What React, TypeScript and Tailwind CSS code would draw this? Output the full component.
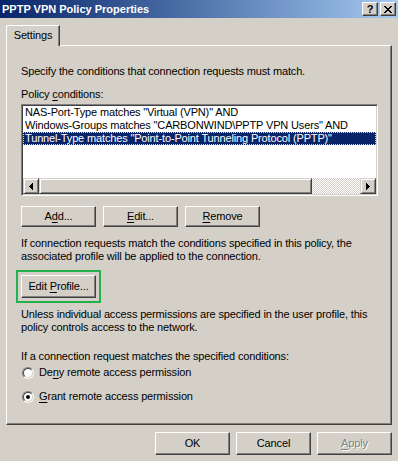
import React from "react";

function U({ children }: { children: React.ReactNode }) {
  return <span className="underline decoration-1 underline-offset-[2px]">{children}</span>;
}

function Btn({ children, className = "" }: { children: React.ReactNode; className?: string }) {
  return (
    <div
      className={
        "flex w-[75px] items-center justify-center border border-t-white border-l-white border-r-[#404040] border-b-[#404040] bg-[#d4d0c8] shadow-[inset_-1px_-1px_0_#808080] " +
        className
      }
    >
      <span className="whitespace-pre">{children}</span>
    </div>
  );
}

function Radio({ checked }: { checked?: boolean }) {
  return (
    <div className="h-[12px] w-[12px] shrink-0 rounded-full border border-t-[#808080] border-l-[#808080] border-r-white border-b-white">
      <div className="flex h-full w-full items-center justify-center rounded-full border border-t-[#404040] border-l-[#404040] border-r-[#d4d0c8] border-b-[#d4d0c8] bg-white">
        {checked && <div className="h-[4px] w-[4px] rounded-full bg-black" />}
      </div>
    </div>
  );
}

function SBtn({ children, className = "" }: { children?: React.ReactNode; className?: string }) {
  return (
    <div
      className={
        "flex h-[16px] shrink-0 items-center justify-center border border-t-[#d4d0c8] border-l-[#d4d0c8] border-r-[#404040] border-b-[#404040] bg-[#d4d0c8] shadow-[inset_1px_1px_0_#fff,inset_-1px_-1px_0_#808080] " +
        className
      }
    >
      {children}
    </div>
  );
}

function ArrowLeft() {
  return (
    <svg width="4" height="7" viewBox="0 0 4 7" shapeRendering="crispEdges" className="-ml-[1px]">
      <rect x="0" y="3" width="1" height="1" fill="#000" />
      <rect x="1" y="2" width="1" height="3" fill="#000" />
      <rect x="2" y="1" width="1" height="5" fill="#000" />
      <rect x="3" y="0" width="1" height="7" fill="#000" />
    </svg>
  );
}

function ArrowRight() {
  return (
    <svg width="4" height="7" viewBox="0 0 4 7" shapeRendering="crispEdges" className="-ml-[1px]">
      <rect x="3" y="3" width="1" height="1" fill="#000" />
      <rect x="2" y="2" width="1" height="3" fill="#000" />
      <rect x="1" y="1" width="1" height="5" fill="#000" />
      <rect x="0" y="0" width="1" height="7" fill="#000" />
    </svg>
  );
}

function CloseGlyph() {
  return (
    <svg width="8" height="7" viewBox="0 0 8 7" shapeRendering="crispEdges">
      <g fill="#000">
        <rect x="0" y="0" width="2" height="1" />
        <rect x="6" y="0" width="2" height="1" />
        <rect x="1" y="1" width="2" height="1" />
        <rect x="5" y="1" width="2" height="1" />
        <rect x="2" y="2" width="4" height="1" />
        <rect x="3" y="3" width="2" height="1" />
        <rect x="2" y="4" width="4" height="1" />
        <rect x="1" y="5" width="2" height="1" />
        <rect x="5" y="5" width="2" height="1" />
        <rect x="0" y="6" width="2" height="1" />
        <rect x="6" y="6" width="2" height="1" />
      </g>
    </svg>
  );
}

function CapBtn({ children }: { children: React.ReactNode }) {
  return (
    <div className="flex h-[14px] w-[16px] items-center justify-center border border-t-white border-l-white border-r-[#404040] border-b-[#404040] bg-[#d4d0c8] shadow-[inset_-1px_-1px_0_#808080]">
      {children}
    </div>
  );
}

export default function App() {
  return (
    <div className="relative h-[461px] w-[398px] overflow-hidden bg-[#d4d0c8] font-['Liberation_Sans',Arial,sans-serif] text-[11px] leading-[13px] tracking-[-0.15px] text-black">
      {/* Title bar */}
      <div className="flex h-[18px] items-center justify-between bg-linear-to-r from-[#0a246a] to-[#a6caf0] pl-[2px] pr-[2px]">
        <span className="font-bold tracking-normal text-white">PPTP VPN Policy Properties</span>
        <div className="flex gap-[2px]">
          <CapBtn>
            <span className="text-[11px] font-bold leading-none text-black">?</span>
          </CapBtn>
          <CapBtn>
            <CloseGlyph />
          </CapBtn>
        </div>
      </div>

      {/* Tab */}
      <div className="relative z-10 ml-[6px] mt-[7px] -mb-[1px] flex h-[21px] w-[54px] justify-center rounded-tl-[2px] border-t border-l border-r border-t-white border-l-white border-r-[#404040] bg-[#d4d0c8] pt-[3px] shadow-[inset_-1px_0_0_#808080]">
        Settings
      </div>

      {/* Panel */}
      <div className="ml-[6px] flex h-[380px] w-[386px] flex-col border border-t-white border-l-white border-r-[#404040] border-b-[#404040] pl-[14px] pt-[19px] shadow-[inset_-1px_-1px_0_#808080]">
        <div className="whitespace-nowrap">Specify the conditions that connection requests must match.</div>
        <div className="mt-[10px] whitespace-nowrap">
          Policy <U>c</U>onditions:
        </div>

        {/* List box */}
        <div className="mt-[3px] flex h-[92px] w-[357px] flex-col border border-t-[#808080] border-l-[#808080] border-r-white border-b-white p-[1px] shadow-[inset_1px_1px_0_#404040,inset_-1px_-1px_0_#d4d0c8]">
          <div className="flex-1 overflow-hidden bg-white">
            <div className="h-[13px] whitespace-nowrap pl-[2px]">NAS-Port-Type matches "Virtual (VPN)" AND</div>
            <div className="h-[13px] whitespace-nowrap pl-[2px]">
              {'Windows-Groups matches "CARBONWIND\\PPTP VPN Users" AND'}
            </div>
            <div className="h-[13px] whitespace-nowrap bg-[#0a246a] pl-[2px] text-white outline-1 -outline-offset-1 outline-dotted outline-[#f5db95]">
              Tunnel-Type matches "Point-to-Point Tunneling Protocol (PPTP)"
            </div>
          </div>
          <div className="flex h-[16px]">
            <SBtn className="w-[16px]">
              <ArrowLeft />
            </SBtn>
            <SBtn className="w-[273px]" />
            <div className="flex-1 bg-[image:conic-gradient(#d4d0c8_25%,#fff_0_50%,#d4d0c8_0_75%,#fff_0)] bg-[length:2px_2px]" />
            <SBtn className="w-[16px]">
              <ArrowRight />
            </SBtn>
          </div>
        </div>

        {/* Add / Edit / Remove */}
        <div className="mt-[10px] flex gap-[7px]">
          <Btn className="h-[21px]">
            A<U>d</U>d...
          </Btn>
          <Btn className="h-[21px]">
            <U>E</U>dit...
          </Btn>
          <Btn className="h-[21px]">
            <U>R</U>emove
          </Btn>
        </div>

        <div className="mt-[10px] whitespace-nowrap">
          If connection requests match the conditions specified in this policy, the
          <br />
          associated profile will be applied to the connection.
        </div>

        <div className="mt-[12px] flex">
          <Btn className="h-[23px] outline-2 outline-offset-[3px] outline-[#22b14c]">
            {"Edit "}
            <U>P</U>rofile...
          </Btn>
        </div>

        <div className="mt-[10px] whitespace-nowrap">
          Unless individual access permissions are specified in the user profile, this
          <br />
          policy controls access to the network.
        </div>

        <div className="mt-[16px] whitespace-nowrap">If a connection request matches the specified conditions:</div>

        <div className="mt-[3px] flex h-[13px] items-center gap-[5px] pl-[1px]">
          <Radio />
          <span className="whitespace-nowrap">
            De<U>n</U>y remote access permission
          </span>
        </div>
        <div className="mt-[11px] flex h-[13px] items-center gap-[5px] pl-[1px]">
          <Radio checked />
          <span className="whitespace-nowrap">
            <U>G</U>rant remote access permission
          </span>
        </div>
      </div>

      {/* Bottom buttons */}
      <div className="ml-[6px] mt-[7px] flex w-[386px] justify-end gap-[6px]">
        <Btn className="h-[23px]">OK</Btn>
        <Btn className="h-[23px]">Cancel</Btn>
        <Btn className="h-[23px] text-[#808080] [text-shadow:1px_1px_0_#fff]">
          <U>A</U>pply
        </Btn>
      </div>
    </div>
  );
}
